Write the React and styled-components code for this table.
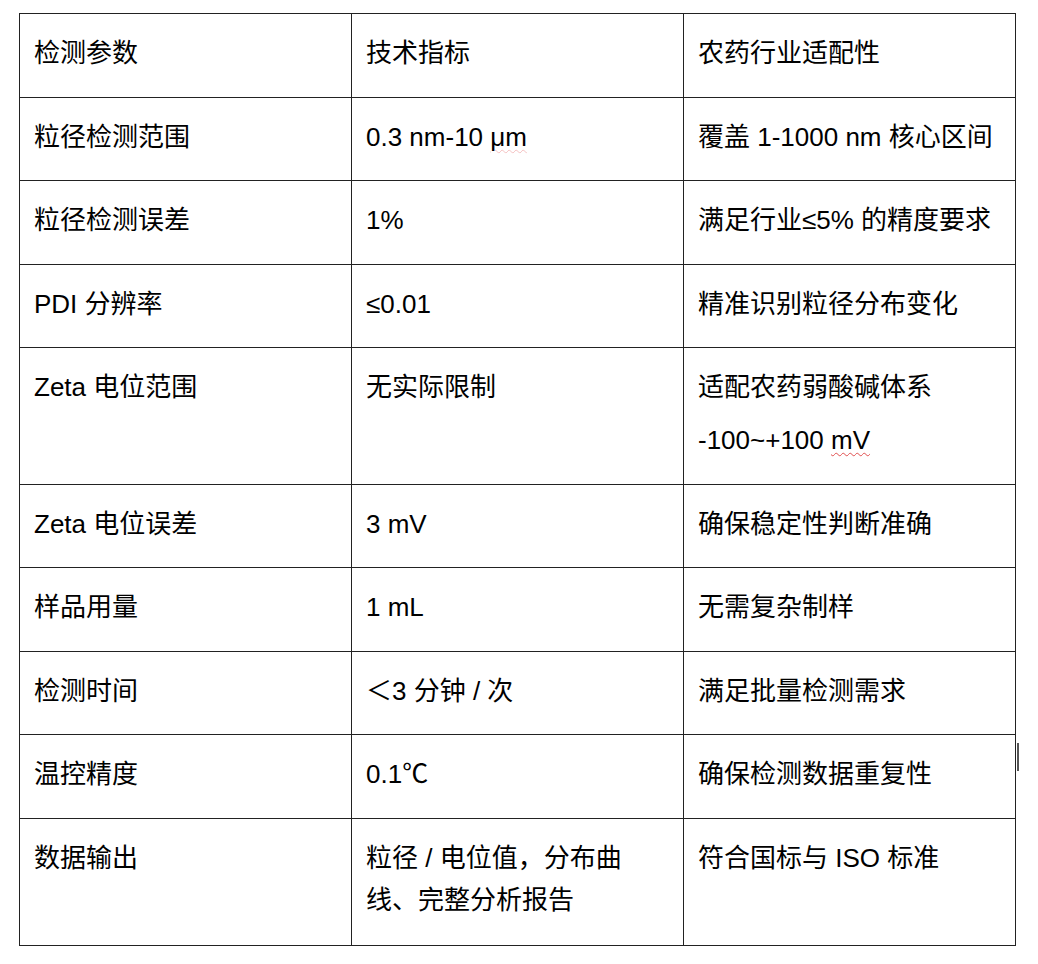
import React from "react";
import styled, { createGlobalStyle } from "styled-components";

const Global = createGlobalStyle`
  html, body { margin: 0; padding: 0; background: #ffffff; }
  body {
    font-family: "Liberation Sans", "Noto Sans CJK SC", sans-serif;
    color: #000;
  }
`;

const Page = styled.div`
  padding: 13px 0 0 19px;
  width: 1038px;
  height: 964px;
  box-sizing: border-box;
`;

const TableWrap = styled.div`
  position: relative;
  width: 997px;
`;

const Table = styled.table`
  width: 997px;
  border-collapse: collapse;
  table-layout: fixed;
  border: 1px solid #222;
`;

const Cell = styled.td`
  border: 1px solid #222;
  padding: 18px 15px ${(p) => p.$padBottom ?? 22.5}px 14px;
  vertical-align: top;
  font-size: 26px;
  line-height: 42px;
  color: #000;
  white-space: nowrap;
`;

const Para = styled.div`
  & + & { margin-top: ${(p) => p.$gap ?? 11}px; }
`;

const Squiggle = styled.span`
  text-decoration: underline wavy ${(p) => p.$color};
  text-decoration-thickness: 1px;
  text-underline-offset: 3px;
`;

const Caret = styled.div`
  position: absolute;
  left: 998px;
  top: 730px;
  width: 2px;
  height: 28px;
  background: #555;
`;

const rows = [
  ["检测参数", "技术指标", "农药行业适配性"],
  [
    "粒径检测范围",
    <>0.3 nm-10 <Squiggle $color="rgba(225,90,90,0.35)">μm</Squiggle></>,
    "覆盖 1-1000 nm 核心区间",
  ],
  ["粒径检测误差", "1%", "满足行业≤5% 的精度要求"],
  ["PDI 分辨率", "≤0.01", "精准识别粒径分布变化"],
  [
    "Zeta 电位范围",
    "无实际限制",
    [
      "适配农药弱酸碱体系",
      <>-100~+100 <Squiggle $color="#e05050">mV</Squiggle></>,
    ],
  ],
  ["Zeta 电位误差", "3 mV", "确保稳定性判断准确"],
  ["样品用量", "1 mL", "无需复杂制样"],
  ["检测时间", "＜3 分钟 / 次", "满足批量检测需求"],
  ["温控精度", "0.1℃", "确保检测数据重复性"],
  [
    "数据输出",
    <>粒径 / 电位值，分布曲<br />线、完整分析报告</>,
    "符合国标与 ISO 标准",
  ],
];

export default function App() {
  return (
    <>
      <Global />
      <Page>
        <TableWrap>
          <Table>
            <tbody>
              {rows.map((r, i) => (
                <tr key={i}>
                  {r.map((c, j) => (
                    <Cell key={j} $padBottom={i === rows.length - 1 ? 24 : 22.5}>
                      {Array.isArray(c)
                        ? c.map((p, k) => <Para key={k}>{p}</Para>)
                        : c}
                    </Cell>
                  ))}
                </tr>
              ))}
            </tbody>
          </Table>
          <Caret />
        </TableWrap>
      </Page>
    </>
  );
}
